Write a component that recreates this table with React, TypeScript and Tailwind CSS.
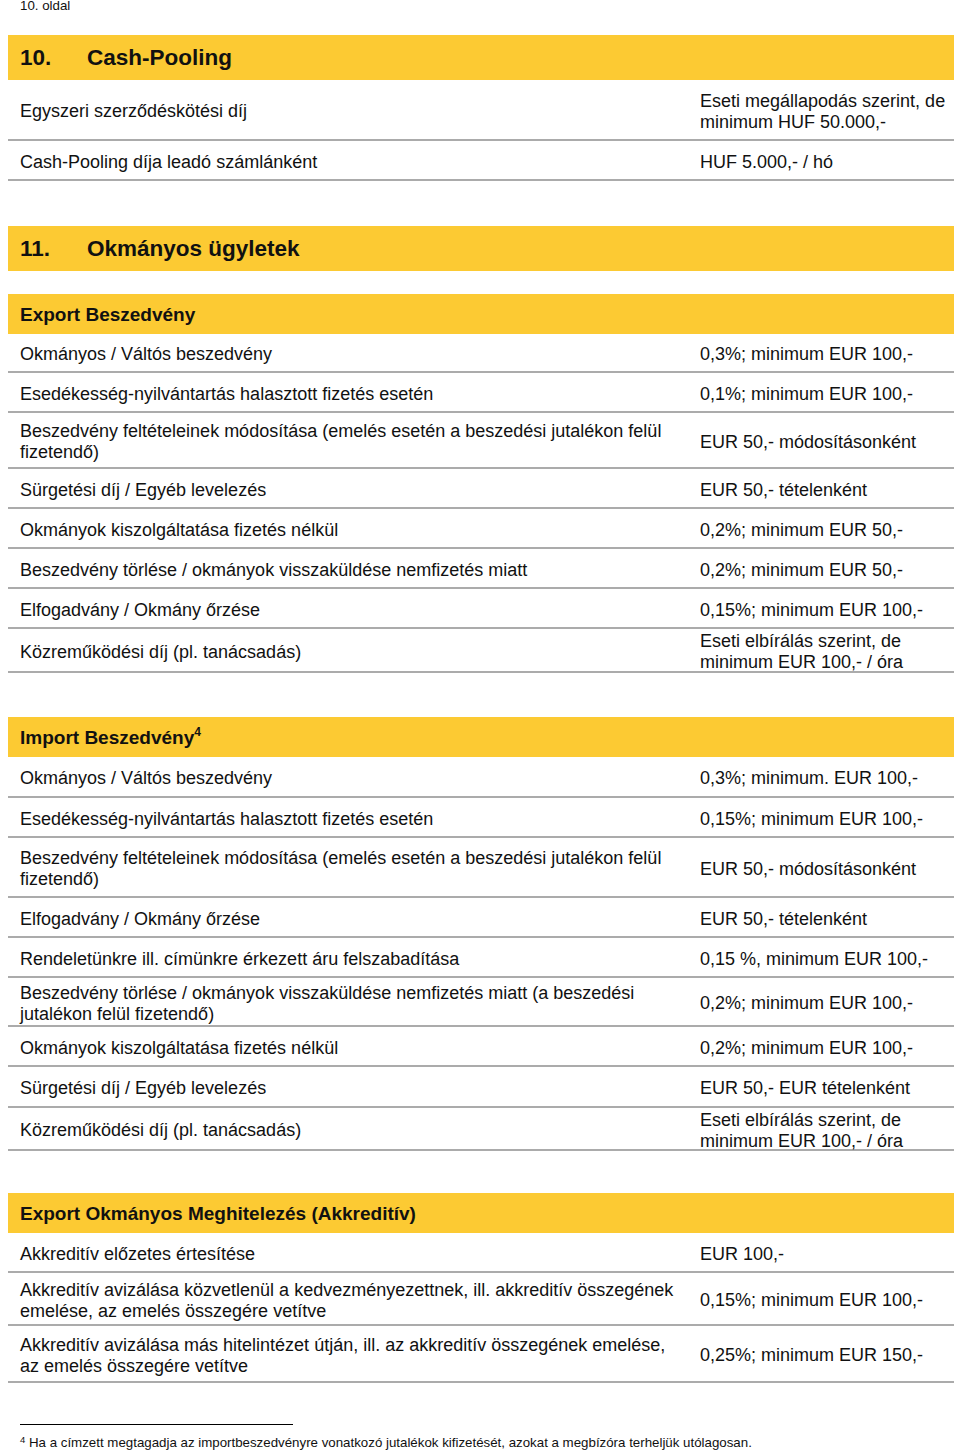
import type { ReactNode } from "react"

type Row = {
  left: ReactNode
  right: ReactNode
  h: string
}

const cashPooling: Row[] = [
  {
    left: "Egyszeri szerződéskötési díj",
    right: (
      <>
        <span className="block">Eseti megállapodás szerint, de</span>
        <span className="block">minimum HUF 50.000,-</span>
      </>
    ),
    h: "h-[61px]",
  },
  { left: "Cash-Pooling díja leadó számlánként", right: "HUF 5.000,- / hó", h: "h-[40px]" },
]

const exportRows: Row[] = [
  { left: "Okmányos / Váltós beszedvény", right: "0,3%; minimum EUR 100,-", h: "h-[39px]" },
  { left: "Esedékesség-nyilvántartás halasztott fizetés esetén", right: "0,1%; minimum EUR 100,-", h: "h-[40px]" },
  {
    left: (
      <>
        <span className="block">Beszedvény feltételeinek módosítása (emelés esetén a beszedési jutalékon felül</span>
        <span className="block">fizetendő)</span>
      </>
    ),
    right: "EUR 50,- módosításonként",
    h: "h-[56px]",
  },
  { left: "Sürgetési díj / Egyéb levelezés", right: "EUR 50,- tételenként", h: "h-[40px]" },
  { left: "Okmányok kiszolgáltatása fizetés nélkül", right: "0,2%; minimum EUR 50,-", h: "h-[40px]" },
  { left: "Beszedvény törlése / okmányok visszaküldése nemfizetés miatt", right: "0,2%; minimum EUR 50,-", h: "h-[40px]" },
  { left: "Elfogadvány / Okmány őrzése", right: "0,15%; minimum EUR 100,-", h: "h-[40px]" },
  {
    left: "Közreműködési díj (pl. tanácsadás)",
    right: (
      <>
        <span className="block">Eseti elbírálás szerint, de</span>
        <span className="block">minimum EUR 100,- / óra</span>
      </>
    ),
    h: "h-[44px]",
  },
]

const importRows: Row[] = [
  { left: "Okmányos / Váltós beszedvény", right: "0,3%; minimum. EUR 100,-", h: "h-[41px]" },
  { left: "Esedékesség-nyilvántartás halasztott fizetés esetén", right: "0,15%; minimum EUR 100,-", h: "h-[40px]" },
  {
    left: (
      <>
        <span className="block">Beszedvény feltételeinek módosítása (emelés esetén a beszedési jutalékon felül</span>
        <span className="block">fizetendő)</span>
      </>
    ),
    right: "EUR 50,- módosításonként",
    h: "h-[60px]",
  },
  { left: "Elfogadvány / Okmány őrzése", right: "EUR 50,- tételenként", h: "h-[40px]" },
  { left: "Rendeletünkre ill. címünkre érkezett áru felszabadítása", right: "0,15 %, minimum EUR 100,-", h: "h-[40px]" },
  {
    left: (
      <>
        <span className="block">Beszedvény törlése / okmányok visszaküldése nemfizetés miatt (a beszedési</span>
        <span className="block">jutalékon felül fizetendő)</span>
      </>
    ),
    right: "0,2%; minimum EUR 100,-",
    h: "h-[49px]",
  },
  { left: "Okmányok kiszolgáltatása fizetés nélkül", right: "0,2%; minimum EUR 100,-", h: "h-[40px]" },
  { left: "Sürgetési díj / Egyéb levelezés", right: "EUR 50,- EUR tételenként", h: "h-[41px]" },
  {
    left: "Közreműködési díj (pl. tanácsadás)",
    right: (
      <>
        <span className="block">Eseti elbírálás szerint, de</span>
        <span className="block">minimum EUR 100,- / óra</span>
      </>
    ),
    h: "h-[43px]",
  },
]

const akkreditivRows: Row[] = [
  { left: "Akkreditív előzetes értesítése", right: "EUR 100,-", h: "h-[40px]" },
  {
    left: (
      <>
        <span className="block">Akkreditív avizálása közvetlenül a kedvezményezettnek, ill. akkreditív összegének</span>
        <span className="block">emelése, az emelés összegére vetítve</span>
      </>
    ),
    right: "0,15%; minimum EUR 100,-",
    h: "h-[53px]",
  },
  {
    left: (
      <>
        <span className="block">Akkreditív avizálása más hitelintézet útján, ill. az akkreditív összegének emelése,</span>
        <span className="block">az emelés összegére vetítve</span>
      </>
    ),
    right: "0,25%; minimum EUR 150,-",
    h: "h-[57px]",
  },
]

function FeeRow({ row }: { row: Row }) {
  return (
    <div className={`flex ${row.h}`}>
      <div className="flex w-[680px] shrink-0 items-center border-b-2 border-[#ababab] pt-[4px] pl-3 whitespace-nowrap">
        <div>{row.left}</div>
      </div>
      <div className="flex flex-1 items-center border-b-2 border-[#ababab] pt-[4px] pl-3 whitespace-nowrap">
        <div>{row.right}</div>
      </div>
    </div>
  )
}

function ChapterBar({ num, title }: { num: string; title: string }) {
  return (
    <div className="flex h-[45px] items-center bg-[#fcca33] pl-3 text-[22.5px] font-bold">
      <span className="w-[67px]">{num}</span>
      <span>{title}</span>
    </div>
  )
}

function SubBar({ children }: { children: ReactNode }) {
  return (
    <div className="flex h-[40px] items-center bg-[#fcca33] pt-[1px] pl-3 text-[19px] font-bold">
      <span>{children}</span>
    </div>
  )
}

export default function App() {
  return (
    <div className="min-h-[1454px] bg-white pl-2 pr-[6px] font-['Liberation_Sans',Arial,sans-serif] text-[18px] leading-[21px] text-[#111]">
      <div className="h-[35px] pl-3 text-[13.3px] leading-[12px]">10. oldal</div>

      <ChapterBar num="10." title="Cash-Pooling" />
      {cashPooling.map((r, i) => (
        <FeeRow key={i} row={r} />
      ))}

      <div className="h-[45px]" />
      <ChapterBar num="11." title="Okmányos ügyletek" />
      <div className="h-[23px]" />

      <SubBar>Export Beszedvény</SubBar>
      {exportRows.map((r, i) => (
        <FeeRow key={i} row={r} />
      ))}

      <div className="h-[44px]" />
      <SubBar>
        Import Beszedvény<sup className="relative -top-[8px] text-[12px]">4</sup>
      </SubBar>
      {importRows.map((r, i) => (
        <FeeRow key={i} row={r} />
      ))}

      <div className="h-[42px]" />
      <SubBar>Export Okmányos Meghitelezés (Akkreditív)</SubBar>
      {akkreditivRows.map((r, i) => (
        <FeeRow key={i} row={r} />
      ))}

      <div className="pt-[41px] pl-3">
        <div className="h-px w-[273px] bg-black" />
        <p className="pt-[11px] text-[13.3px] leading-[14px]">
          <sup className="relative -top-[4px] text-[9.5px]">4</sup> Ha a címzett megtagadja az importbeszedvényre
          vonatkozó jutalékok kifizetését, azokat a megbízóra terheljük utólagosan.
        </p>
      </div>
    </div>
  )
}
